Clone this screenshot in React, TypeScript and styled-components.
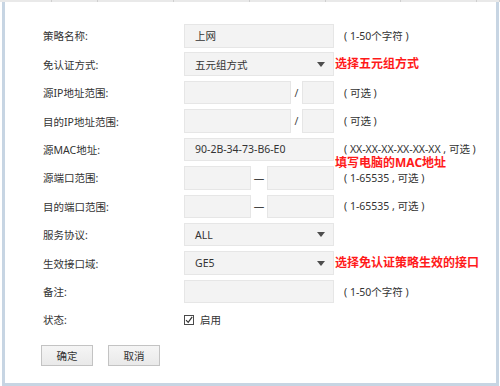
import React from 'react';
import styled, { createGlobalStyle } from 'styled-components';

const GlobalStyle = createGlobalStyle`
    html, body {
        margin: 0;
        padding: 0;
        background: #ffffff;
    }
    body {
        font-family: 'Noto Sans', 'Noto Sans CJK SC', sans-serif;
        color: #333333;
    }
`;

const Page = styled.div`
    width: 500px;
    height: 386px;
    overflow: hidden;
    background: #ffffff;
`;

const TabStrip = styled.div`
    display: flex;
    height: 2px;
    background: #e9e9e9;
`;

const TabTick = styled.div<{ $w: number }>`
    width: ${(p) => p.$w}px;
    flex: none;
    border-right: 1px solid #cfcfcf;
    box-sizing: border-box;
`;

const Panel = styled.div`
    box-sizing: border-box;
    margin-left: 2px;
    width: 497px;
    height: 384px;
    border-left: 3px solid #c7d5e3;
    border-right: 3px solid #c7d5e3;
    border-bottom: 3px solid #c7d5e3;
    padding: 22px 0 0 38px;
`;

const Form = styled.div`
    display: flex;
    flex-direction: column;
    gap: 4.93px;
`;

const Row = styled.div`
    display: grid;
    grid-template-columns: 141px 150px 1fr;
    align-items: center;
    height: 23.5px;
`;

const Label = styled.div`
    font-size: 10.5px;
    color: #333333;
    white-space: nowrap;
`;

const Control = styled.div`
    display: flex;
    align-items: center;
    height: 100%;
`;

const Field = styled.div<{ $w?: number }>`
    box-sizing: border-box;
    width: ${(p) => (p.$w ? `${p.$w}px` : '100%')};
    height: 100%;
    background: #f3f3f3;
    border: 1px solid #e6e6e6;
    display: flex;
    align-items: center;
    padding-left: 10px;
    font-size: 10.5px;
    color: #333333;
    flex: none;
`;

const SelectField = styled(Field)`
    justify-content: space-between;
    padding-right: 8px;
`;

const Caret = styled.span`
    width: 0;
    height: 0;
    border-left: 4px solid transparent;
    border-right: 4px solid transparent;
    border-top: 5px solid #4d4d4d;
`;

const Sep = styled.div<{ $w: number }>`
    width: ${(p) => p.$w}px;
    flex: none;
    text-align: center;
    font-size: 10.5px;
    color: #444444;
`;

const Aside = styled.div`
    position: relative;
    display: flex;
    align-items: center;
    height: 100%;
    white-space: nowrap;
`;

const Note = styled.span`
    margin-left: 10px;
    font-size: 10.5px;
    line-height: 12px;
    color: #333333;
`;

const Hint = styled.span<{ $below?: boolean }>`
    margin-left: 1px;
    font-size: 12px;
    font-weight: 700;
    color: #ff1a1a;
    line-height: 12px;
    ${(p) =>
        p.$below &&
        `
        position: absolute;
        left: 0;
        top: 19px;
    `}
`;

const CheckWrap = styled.label`
    display: flex;
    align-items: center;
    gap: 6px;
    font-size: 10.5px;
    color: #333333;
`;

const CheckBox = styled.span`
    width: 10px;
    height: 10px;
    box-sizing: border-box;
    border: 1px solid #4a4a4a;
    display: flex;
    align-items: center;
    justify-content: center;
    background: #ffffff;
`;

const Actions = styled.div`
    display: flex;
    gap: 15px;
    margin: 13.5px 0 0 -2px;
`;

const Button = styled.button`
    box-sizing: border-box;
    width: 52px;
    height: 21px;
    padding: 0;
    border: 1px solid #c3c3c3;
    background: linear-gradient(#f5f5f5, #e9e9e9);
    font-family: 'Noto Sans', 'Noto Sans CJK SC', sans-serif;
    font-size: 10.5px;
    color: #333333;
`;

const ticks = [52, 46, 76, 76, 76, 75, 76, 23];

const Select = ({ value }: { value: string }) => (
    <SelectField>
        <span>{value}</span>
        <Caret />
    </SelectField>
);

const App = () => (
    <Page>
        <GlobalStyle />
        <TabStrip>
            {ticks.map((w, i) => (
                <TabTick key={i} $w={w} />
            ))}
        </TabStrip>
        <Panel>
            <Form>
                <Row>
                    <Label>策略名称:</Label>
                    <Control>
                        <Field>上网</Field>
                    </Control>
                    <Aside>
                        <Note>( 1-50个字符 )</Note>
                    </Aside>
                </Row>
                <Row>
                    <Label>免认证方式:</Label>
                    <Control>
                        <Select value='五元组方式' />
                    </Control>
                    <Aside>
                        <Hint>选择五元组方式</Hint>
                    </Aside>
                </Row>
                <Row>
                    <Label>源IP地址范围:</Label>
                    <Control>
                        <Field $w={107} />
                        <Sep $w={11}>/</Sep>
                        <Field $w={32} />
                    </Control>
                    <Aside>
                        <Note>( 可选 )</Note>
                    </Aside>
                </Row>
                <Row>
                    <Label>目的IP地址范围:</Label>
                    <Control>
                        <Field $w={107} />
                        <Sep $w={11}>/</Sep>
                        <Field $w={32} />
                    </Control>
                    <Aside>
                        <Note>( 可选 )</Note>
                    </Aside>
                </Row>
                <Row>
                    <Label>源MAC地址:</Label>
                    <Control>
                        <Field>90-2B-34-73-B6-E0</Field>
                    </Control>
                    <Aside>
                        <Note>( XX-XX-XX-XX-XX-XX , 可选 )</Note>
                        <Hint $below>填写电脑的MAC地址</Hint>
                    </Aside>
                </Row>
                <Row>
                    <Label>源端口范围:</Label>
                    <Control>
                        <Field $w={67} />
                        <Sep $w={16}>—</Sep>
                        <Field $w={67} />
                    </Control>
                    <Aside>
                        <Note>( 1-65535 , 可选 )</Note>
                    </Aside>
                </Row>
                <Row>
                    <Label>目的端口范围:</Label>
                    <Control>
                        <Field $w={67} />
                        <Sep $w={16}>—</Sep>
                        <Field $w={67} />
                    </Control>
                    <Aside>
                        <Note>( 1-65535 , 可选 )</Note>
                    </Aside>
                </Row>
                <Row>
                    <Label>服务协议:</Label>
                    <Control>
                        <Select value='ALL' />
                    </Control>
                    <Aside />
                </Row>
                <Row>
                    <Label>生效接口域:</Label>
                    <Control>
                        <Select value='GE5' />
                    </Control>
                    <Aside>
                        <Hint>选择免认证策略生效的接口</Hint>
                    </Aside>
                </Row>
                <Row>
                    <Label>备注:</Label>
                    <Control>
                        <Field />
                    </Control>
                    <Aside>
                        <Note>( 1-50个字符 )</Note>
                    </Aside>
                </Row>
                <Row>
                    <Label>状态:</Label>
                    <Control>
                        <CheckWrap>
                            <CheckBox>
                                <svg width='8' height='8' viewBox='0 0 8 8'>
                                    <path d='M1 4.2 L3.2 6.4 L7.2 0.8' fill='none' stroke='#333' strokeWidth='1.2' />
                                </svg>
                            </CheckBox>
                            启用
                        </CheckWrap>
                    </Control>
                    <Aside />
                </Row>
            </Form>
            <Actions>
                <Button>确定</Button>
                <Button>取消</Button>
            </Actions>
        </Panel>
    </Page>
);

export default App;
